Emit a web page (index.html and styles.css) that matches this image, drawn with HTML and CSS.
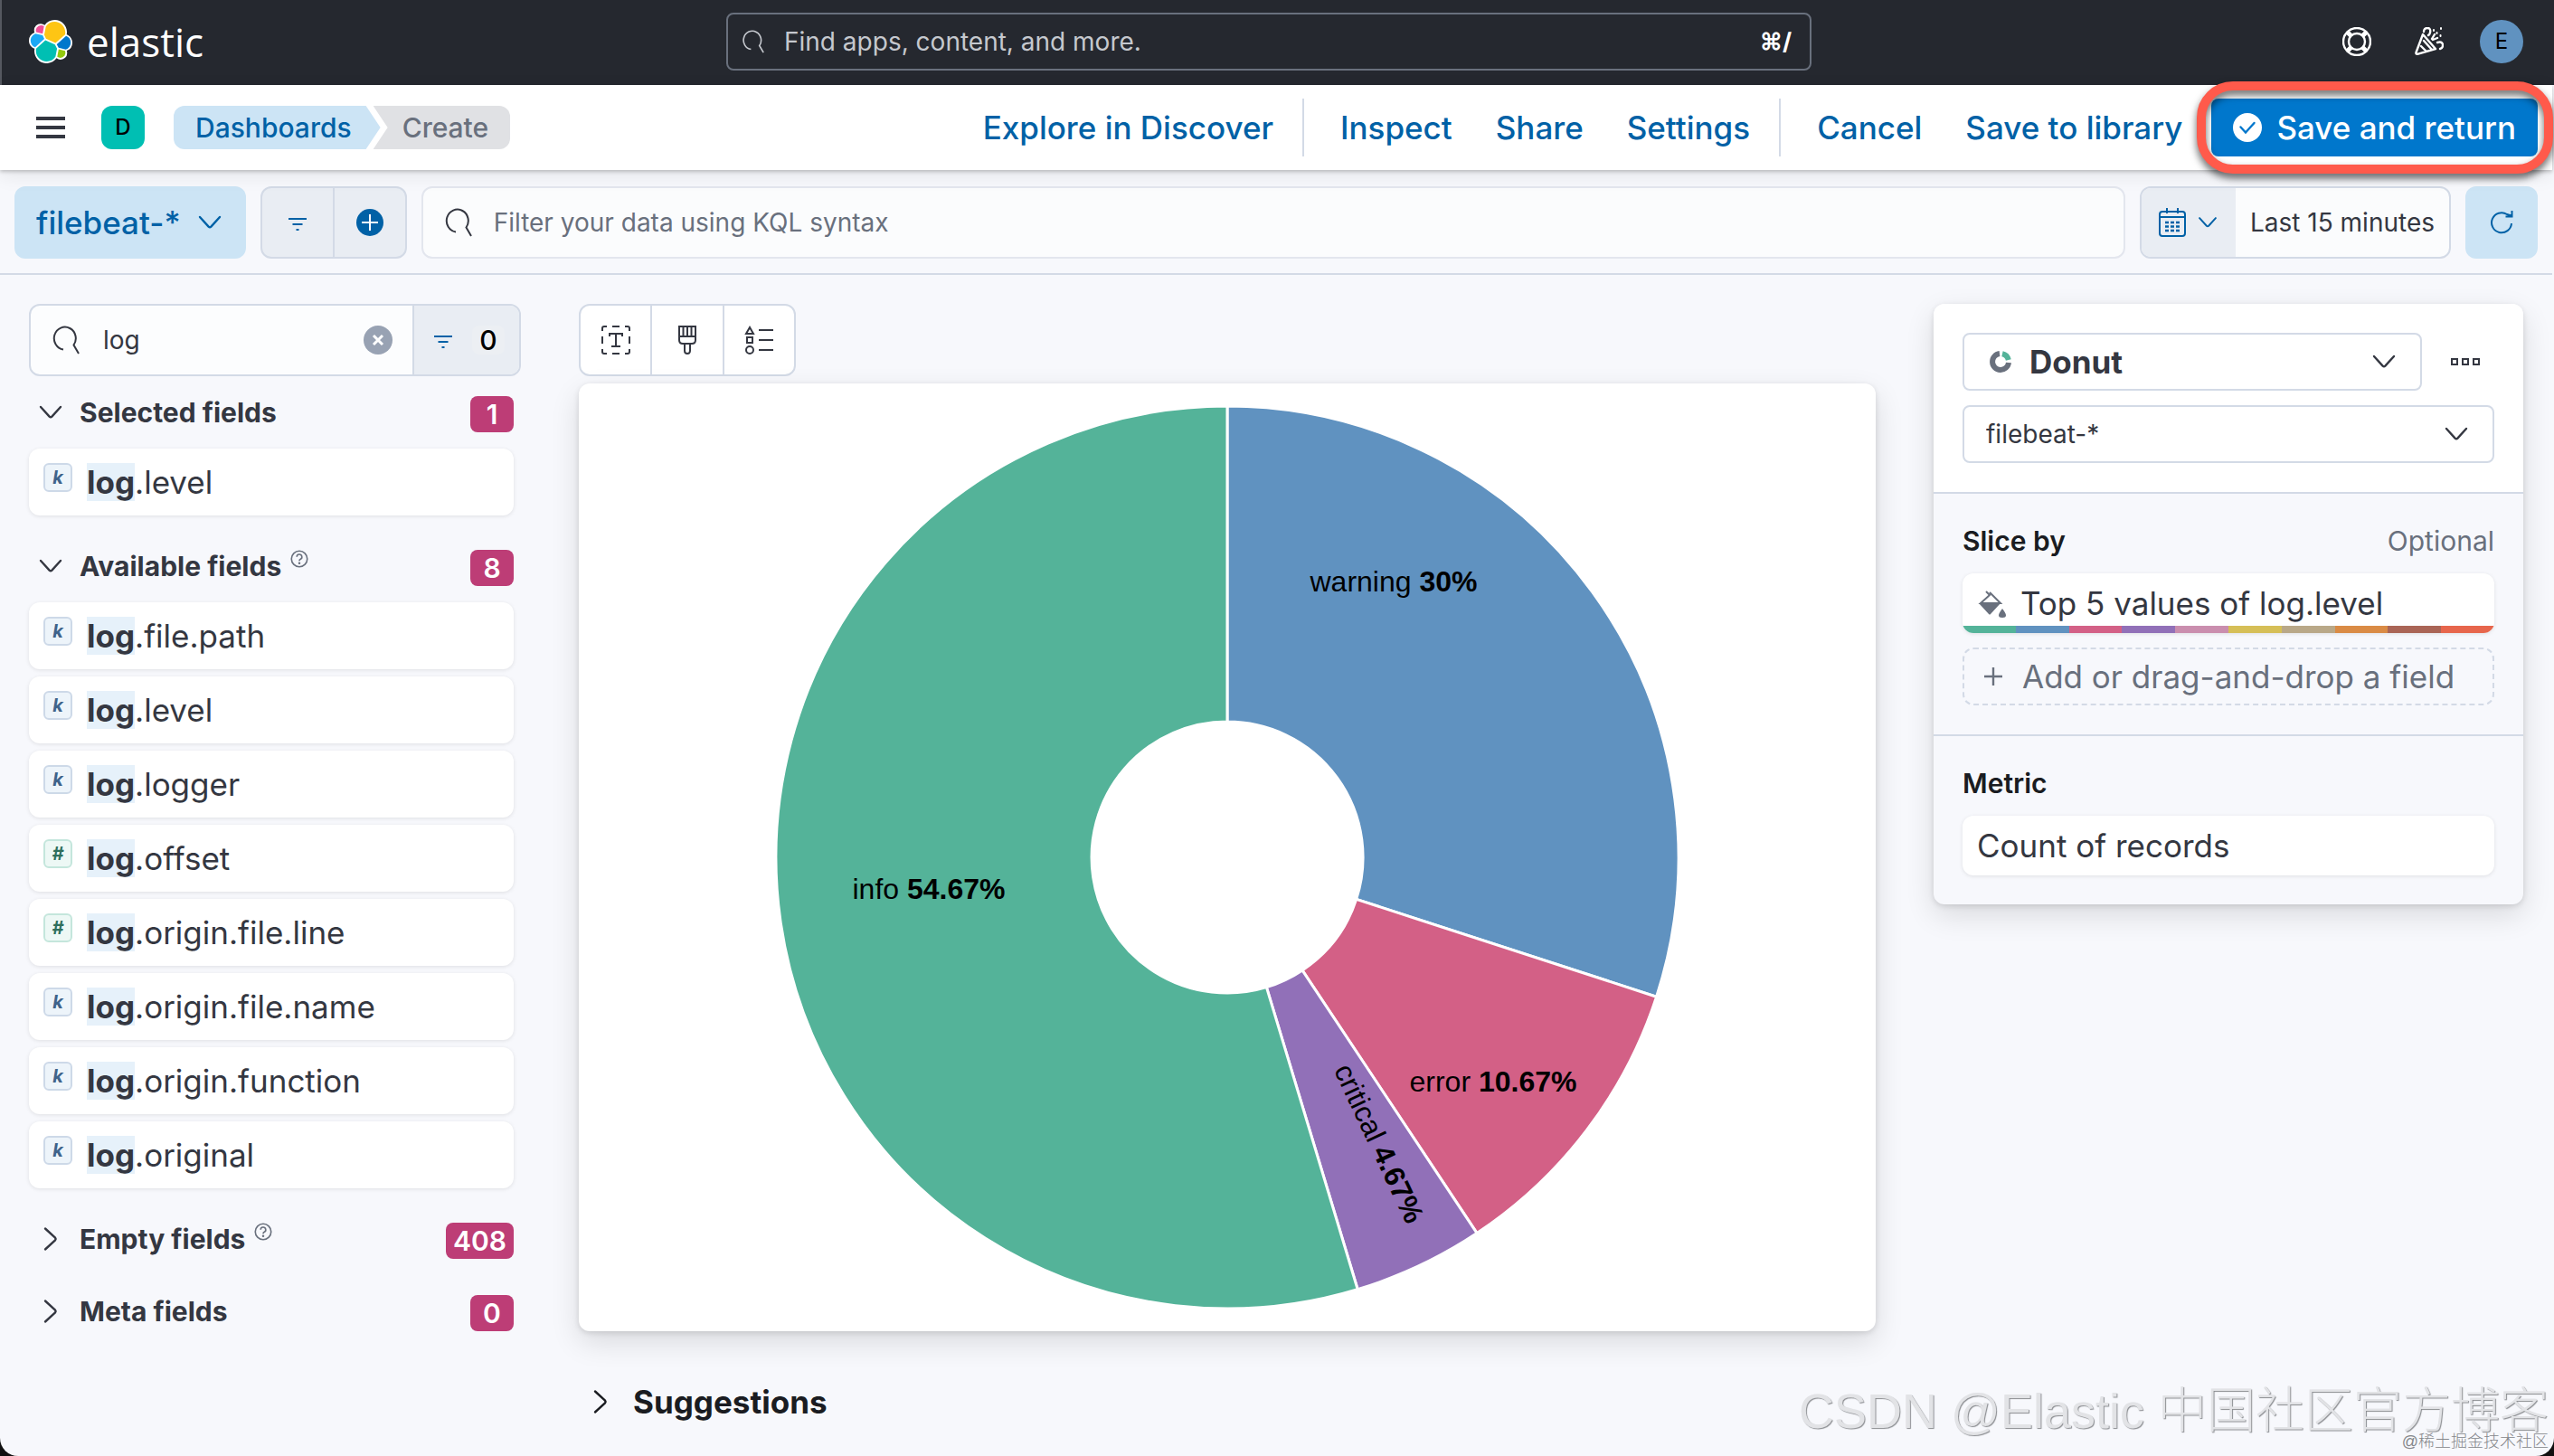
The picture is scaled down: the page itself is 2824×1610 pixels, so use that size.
FILE: index.html
```html
<!DOCTYPE html>
<html lang="en">
<head>
  <meta charset="utf-8">
  <title>Create - Elastic</title>
  <link rel="stylesheet" href="styles.css">
</head>
<body>
  <svg class="sprite" aria-hidden="true">
    <symbol id="i-search" viewBox="0 0 32 32"><path d="M14 26.500A12 12.500 0 1 1 25.500 21.500L31 31" fill="none" stroke="currentColor" stroke-width="2"/></symbol>
    <symbol id="i-down" viewBox="0 0 32 32"><path d="M5 10l9.600 10.600q1.400 1.200 2.800 0L27 10" fill="none" stroke="currentColor" stroke-width="2.400" stroke-linecap="round"/></symbol>
    <symbol id="i-right" viewBox="0 0 32 32"><path d="M10 4.500l11 10.100q1.200 1.400 0 2.800L10 27.500" fill="none" stroke="currentColor" stroke-width="2.400" stroke-linecap="round"/></symbol>
    <symbol id="i-filter" viewBox="0 0 32 32"><path d="M6 12h20M10.500 18h11M14.500 24h3" fill="none" stroke="currentColor" stroke-width="2.200"/></symbol>
    <symbol id="i-help" viewBox="0 0 32 32"><circle cx="16" cy="16" r="14" fill="none" stroke="currentColor" stroke-width="2.600"/><path d="M11.500 12.500a4.500 4.500 0 1 1 6 4.200q-1.500.8-1.500 3" fill="none" stroke="currentColor" stroke-width="2.600"/><circle cx="16" cy="23.500" r="2" fill="currentColor"/></symbol>
  </svg>

  <header class="header">
    <a class="logo" href="#" aria-label="Elastic home">
      <svg viewBox="0 0 32 32">
        <path fill="#fff" d="M32 16.770c0-2.680-1.660-5.040-4.150-5.952.11-.57.166-1.143.166-1.743C28.016 4.070 23.950 0 18.953 0c-2.923 0-5.630 1.400-7.338 3.768a4.808 4.808 0 0 0-2.953-1.005 4.838 4.838 0 0 0-4.833 4.834c0 .584.11 1.153.3 1.675A6.387 6.387 0 0 0 0 15.253c0 2.700 1.674 5.068 4.170 5.976a9.290 9.290 0 0 0-.165 1.744c0 4.990 4.062 9.051 9.050 9.051 2.930 0 5.620-1.410 7.320-3.790a4.783 4.783 0 0 0 2.963 1.020 4.838 4.838 0 0 0 4.834-4.834c0-.585-.11-1.154-.3-1.675A6.387 6.387 0 0 0 32 16.770"/>
        <path fill="#fec514" d="M12.580 13.787l7.002 3.211 7.066-6.213a7.854 7.854 0 0 0 .156-1.565c0-4.323-3.515-7.839-7.838-7.839a7.843 7.843 0 0 0-6.482 3.433l-1.180 6.122z"/>
        <path fill="#00bfb3" d="M5.333 21.228a7.980 7.980 0 0 0-.156 1.590 7.865 7.865 0 0 0 7.854 7.857 7.878 7.878 0 0 0 6.514-3.464l1.167-6.090-1.558-2.981-7.027-3.204z"/>
        <path fill="#f04e98" d="M5.288 9.067l4.800 1.137 1.052-5.476a3.778 3.778 0 0 0-2.295-.77 3.824 3.824 0 0 0-3.557 5.110"/>
        <path fill="#1ba9f5" d="M4.871 10.215c-2.147.714-3.653 2.780-3.653 5.040 0 2.180 1.347 4.124 3.370 4.894l6.735-6.100-1.236-2.646z"/>
        <path fill="#93c90e" d="M20.873 27.213a3.764 3.764 0 0 0 2.285.774 3.824 3.824 0 0 0 3.552-5.118l-4.794-1.125z"/>
        <path fill="#07c" d="M21.844 20.577l5.285 1.240c2.147-.714 3.654-2.780 3.654-5.041a5.260 5.260 0 0 0-3.377-4.887l-6.912 6.070z"/>
      </svg>
      <span>elastic</span>
    </a>
    <div class="global-search">
      <svg class="icon-sm"><use href="#i-search"/></svg>
      <input type="search" placeholder="Find apps, content, and more." aria-label="Find apps, content, and more.">
      <kbd>⌘/</kbd>
    </div>
    <div class="header-actions">
      <button aria-label="Help">
        <svg class="icon" viewBox="0 0 32 32" fill="none" stroke="currentColor"><circle cx="16" cy="16" r="15" stroke-width="2.400"/><circle cx="16" cy="16" r="9" stroke-width="2.400"/><path d="M5.500 5.500l4 4M26.500 5.500l-4 4M5.500 26.500l4-4M26.500 26.500l-4-4" stroke-width="5"/></svg>
      </button>
      <button aria-label="What's new">
        <svg class="icon" viewBox="0 0 32 32" fill="none" stroke="currentColor" stroke-width="2.400" stroke-linecap="round" stroke-linejoin="round"><path d="M9 8L1.500 28q-.5 2 1.500 1.800L23 24zM7 21l6 6M10 15l9 10M10 5q0-4 4-4t3 5q-.5 2.500-2 3M19 13l3-5M20 14l5-2M25 17q5-1.500 6 2 .5 4-3 5"/><path d="M21 3v1M29 1v1M28.500 9v1M24.500 6v1" stroke-width="2"/></svg>
      </button>
      <button class="avatar" aria-label="Account menu">E</button>
    </div>
  </header>

  <nav class="nav">
    <button class="menu" aria-label="Toggle navigation"><svg class="icon" viewBox="0 0 32 32"><path d="M0 6h32M0 16h32M0 26h32" stroke="currentColor" stroke-width="4"/></svg></button>
    <button class="space" aria-label="Default space">D</button>
    <div class="breadcrumbs">
      <a href="#">Dashboards</a>
      <span>Create</span>
    </div>
    <div class="nav-links">
      <a href="#">Explore in Discover</a>
      <i></i>
      <a href="#">Inspect</a>
      <a href="#">Share</a>
      <a href="#">Settings</a>
      <i></i>
      <a href="#">Cancel</a>
      <a href="#">Save to library</a>
    </div>
    <button class="save">
      <svg class="icon" viewBox="0 0 32 32"><circle cx="16" cy="16" r="16" fill="#fff"/><path d="M8.500 15.500l5.500 6 9.500-10.500" fill="none" stroke="#07c" stroke-width="2.400" stroke-linecap="round"/></svg>
      Save and return
    </button>
  </nav>

  <div class="query-bar">
    <button class="data-view">filebeat-*<svg class="icon"><use href="#i-down"/></svg></button>
    <div class="filter-group">
      <button aria-label="Saved queries"><svg class="icon"><use href="#i-filter"/></svg></button>
      <button aria-label="Add filter"><svg class="icon" viewBox="0 0 32 32"><circle cx="16" cy="16" r="15" fill="currentColor"/><path d="M16 7v18M7 16h18" stroke="#fff" stroke-width="2"/></svg></button>
    </div>
    <div class="kql">
      <svg class="icon"><use href="#i-search"/></svg>
      <input type="search" placeholder="Filter your data using KQL syntax" aria-label="Filter your data using KQL syntax">
    </div>
    <div class="date">
      <button class="date-quick" aria-label="Date quick select">
        <svg class="icon" viewBox="0 0 32 32" fill="none" stroke="currentColor" stroke-width="2"><rect x="2" y="4" width="28" height="27" rx="3"/><path d="M2 10h28M10 0v6M22 0v6"/><path d="M8 16h16M8 20.500h16M8 25h16" stroke-width="2.600" stroke-dasharray="4 2"/></svg>
        <svg class="icon-sm"><use href="#i-down"/></svg>
      </button>
      <button class="date-value">Last 15 minutes</button>
    </div>
    <button class="refresh" aria-label="Refresh"><svg class="icon" viewBox="0 0 32 32"><path d="M27 17a11 11 0 1 1-5-10l5 1.500M27.500 3v6.500h-7" fill="none" stroke="currentColor" stroke-width="2"/></svg></button>
  </div>

  <main class="workspace">
    <aside class="sidebar">
      <div class="field-search">
        <svg class="icon"><use href="#i-search"/></svg>
        <input type="text" value="log" aria-label="Search field names">
        <button class="clear" aria-label="Clear input"><svg class="icon" viewBox="0 0 32 32"><circle cx="16" cy="16" r="16" fill="#98a2b3"/><path d="M11 11l10 10M21 11L11 21" stroke="#fff" stroke-width="3"/></svg></button>
        <button class="type-filter" aria-label="Filter by type"><svg class="icon"><use href="#i-filter"/></svg><span>0</span></button>
      </div>

      <button class="group"><svg class="icon"><use href="#i-down"/></svg>Selected fields<span class="count">1</span></button>
      <ul class="fields">
        <li><span class="token">k</span><span><mark>log</mark>.level</span></li>
      </ul>
      <button class="group"><svg class="icon"><use href="#i-down"/></svg>Available fields<svg class="tip"><use href="#i-help"/></svg><span class="count">8</span></button>
      <ul class="fields">
        <li><span class="token">k</span><span><mark>log</mark>.file.path</span></li>
        <li><span class="token">k</span><span><mark>log</mark>.level</span></li>
        <li><span class="token">k</span><span><mark>log</mark>.logger</span></li>
        <li><span class="token number">#</span><span><mark>log</mark>.offset</span></li>
        <li><span class="token number">#</span><span><mark>log</mark>.origin.file.line</span></li>
        <li><span class="token">k</span><span><mark>log</mark>.origin.file.name</span></li>
        <li><span class="token">k</span><span><mark>log</mark>.origin.function</span></li>
        <li><span class="token">k</span><span><mark>log</mark>.original</span></li>
      </ul>
      <button class="group"><svg class="icon"><use href="#i-right"/></svg>Empty fields<svg class="tip"><use href="#i-help"/></svg><span class="count">408</span></button>
      <button class="group"><svg class="icon"><use href="#i-right"/></svg>Meta fields<span class="count">0</span></button>
    </aside>

    <section class="editor">
      <div class="toolbar">
        <button aria-label="Labels"><svg class="icon" viewBox="0 0 32 32" fill="none" stroke="currentColor" stroke-width="2"><path d="M1 6V3q0-2 2-2h3M26 1h3q2 0 2 2v3M31 26v3q0 2-2 2h-3M6 31H3q-2 0-2-2v-3M12 1h8M12 31h8M1 12v8M31 12v8M9 12V9h14v3M16 9v14M11 23h10"/></svg></button>
        <button aria-label="Appearance"><svg class="icon" viewBox="0 0 32 32" fill="none" stroke="currentColor" stroke-width="2"><path d="M7 1h18v15q0 4-4 4H11q-4 0-4-4zM7 12h18M11.500 1v11M16 1v11M20.500 1v11M13 20v8q0 3 3 3t3-3v-8"/></svg></button>
        <button aria-label="Legend"><svg class="icon" viewBox="0 0 32 32" fill="none" stroke="currentColor" stroke-width="2"><path d="M6 2l4 7H2zM3 13h6v6H3zM16 5h16M16 16h16M16 27h16"/><circle cx="6" cy="27" r="4"/></svg></button>
      </div>
      <div class="chart">
        <svg viewBox="0 0 1434 1048" role="img" aria-label="Donut of log.level">
          <g stroke="#fff" stroke-width="3">
            <path fill="#6092c0" d="M717 25A499 499 0 0 1 1191.600 678.200L859.700 570.400A150 150 0 0 0 717 374Z"/>
            <path fill="#d36086" d="M1191.600 678.200A499 499 0 0 1 993.100 939.600L800 648.900A150 150 0 0 0 859.700 570.400Z"/>
            <path fill="#9170b8" d="M993.100 939.600A499 499 0 0 1 861.200 1001.700L760.400 667.600A150 150 0 0 0 800 648.900Z"/>
            <path fill="#54b399" d="M861.200 1001.700A499 499 0 1 1 717 25L717 374A150 150 0 1 0 760.400 667.600Z"/>
          </g>
          <g class="slice-labels">
            <text x="901" y="230">warning <tspan>30%</tspan></text>
            <text x="1011" y="783">error <tspan>10.67%</tspan></text>
            <text x="387" y="570">info <tspan>54.67%</tspan></text>
            <text transform="translate(875 845) rotate(64.800)">critical <tspan>4.67%</tspan></text>
          </g>
        </svg>
      </div>
      <button class="suggestions"><svg class="icon"><use href="#i-right"/></svg>Suggestions</button>
    </section>

    <aside class="config">
      <div class="config-head">
        <div class="chart-type">
          <div class="picker strong">
            <svg class="icon" viewBox="0 0 32 32" fill="none" stroke-width="6"><path d="M15 7a9 9 0 1 0 10 10" stroke="#69707d"/><path d="M18 7.200a9 9 0 0 1 6.800 6.800" stroke="#54b399"/></svg>
            <select aria-label="Visualization type"><option>Donut</option></select>
            <svg class="icon"><use href="#i-down"/></svg>
          </div>
          <button class="more" aria-label="Layer options"><svg class="icon" viewBox="0 0 32 32" fill="none" stroke="currentColor" stroke-width="2"><path d="M1 13h6v6H1zM13 13h6v6h-6zM25 13h6v6h-6z"/></svg></button>
        </div>
        <div class="picker">
          <select aria-label="Data view"><option>filebeat-*</option></select>
          <svg class="icon"><use href="#i-down"/></svg>
        </div>
      </div>
      <div class="config-section">
        <h3>Slice by <span>Optional</span></h3>
        <button class="dimension">
          <svg class="icon" viewBox="0 0 32 32"><path d="M10 3l4 4-10 9h22L14 4" fill="none" stroke="#69707d" stroke-width="2"/><path d="M2 16h24L15 28q-1 1-2 0zM28 22q8 10 0 10t0-10" fill="#69707d"/></svg>
          Top 5 values of log.level
          <span class="palette"><i></i><i></i><i></i><i></i><i></i><i></i><i></i><i></i><i></i><i></i></span>
        </button>
        <button class="dimension empty">
          <svg class="icon" viewBox="0 0 32 32"><path d="M16 6v20M6 16h20" stroke="currentColor" stroke-width="2.400"/></svg>
          Add or drag-and-drop a field
        </button>
      </div>
      <div class="config-section">
        <h3>Metric</h3>
        <button class="dimension">Count of records</button>
      </div>
    </aside>
  </main>

  <div class="watermark">CSDN @Elastic 中国社区官方博客</div>
  <div class="watermark-small">@稀土掘金技术社区</div>
</body>
</html>
```

FILE: styles.css
```css
* {
  box-sizing: border-box;
}

html {
  background: #111;
}

body {
  position: relative;
  min-height: 100vh;
  margin: 0;
  padding-right: 2px;
  overflow-x: hidden;
  background: #f7f8fc;
  border-radius: 0 0 20px 20px;
  color: #343741;
  font-family: Inter, "Noto Sans CJK SC", sans-serif;
  font-size: 28px;
  line-height: 40px;
}

button,
input,
select {
  margin: 0;
  padding: 0;
  border: none;
  outline: none;
  background: none;
  color: inherit;
  font: inherit;
}

input[type="search"] {
  appearance: none;
}

a {
  color: #0061a6;
  text-decoration: none;
}

.sprite {
  position: absolute;
  width: 0;
  height: 0;
}

.icon {
  display: block;
  flex: none;
  width: 32px;
  height: 32px;
}

.icon-sm {
  display: block;
  flex: none;
  width: 26px;
  height: 26px;
}

/* Top bar */
.header {
  display: grid;
  grid-template-columns: 1fr 1200px 1fr;
  align-items: center;
  height: 94px;
  margin-right: -2px;
  padding: 0 34px 2px 30px;
  background: #25282f;
  border-left: 2px solid #555860;
  color: #fff;
}

.logo {
  display: flex;
  align-items: center;
  gap: 16px;
  color: #fff;
  font-family: "Open Sans", sans-serif;
  font-size: 44px;
}

.logo svg {
  width: 48px;
  height: 48px;
}

.global-search {
  display: flex;
  align-items: center;
  gap: 22px;
  height: 64px;
  margin-left: -8px;
  margin-right: 8px;
  padding: 0 20px 0 14px;
  border: 2px solid #69707d;
  border-radius: 8px;
  color: #c5c8ce;
}

.global-search input {
  flex: 1;
}

.global-search ::placeholder {
  color: #c5c8ce;
}

.global-search kbd {
  color: #fff;
  font-family: Inter, "DejaVu Sans", sans-serif;
  font-size: 26px;
  font-weight: 700;
}

.header-actions {
  display: flex;
  justify-content: flex-end;
  align-items: center;
  gap: 48px;
}

.avatar {
  width: 48px;
  height: 48px;
  margin-left: -8px;
  background: #6092c0;
  border-radius: 50%;
  color: #000;
  font-size: 24px;
}

/* Breadcrumbs and page actions */
.nav {
  position: relative;
  display: flex;
  align-items: center;
  height: 94px;
  padding: 0 16px 0 40px;
  background: #fff;
  box-shadow: 0 2px 4px rgba(0, 0, 0, 0.2), 0 6px 20px rgba(0, 0, 0, 0.08);
}

.space {
  width: 48px;
  height: 48px;
  margin: 0 32px 0 40px;
  background: #00bfb3;
  border-radius: 12px;
  color: #000;
  font-size: 24px;
  font-weight: 500;
}

.breadcrumbs {
  display: flex;
  font-size: 30px;
  font-weight: 500;
  line-height: 48px;
}

.breadcrumbs a {
  padding: 0 32px 0 24px;
  background: #cce4f5;
  border-radius: 12px 0 0 12px;
  clip-path: polygon(0 0, calc(100% - 16px) 0, 100% 50%, calc(100% - 16px) 100%, 0 100%);
}

.breadcrumbs span {
  margin-left: -8px;
  padding: 0 24px 0 32px;
  background: #e0e1e4;
  border-radius: 0 12px 12px 0;
  clip-path: polygon(0 0, 100% 0, 100% 100%, 0 100%, 16px 50%);
  color: #69707d;
}

.nav-links {
  display: flex;
  align-items: center;
  gap: 48px;
  margin-left: auto;
  margin-right: 32px;
  font-size: 35px;
  font-weight: 500;
}

.nav-links i {
  width: 2px;
  height: 64px;
  margin: 0 -8px 0 -16px;
  background: #d3dae6;
}

.save {
  position: relative;
  display: flex;
  align-items: center;
  gap: 16px;
  height: 64px;
  padding: 0 24px;
  background: #07c;
  border-radius: 8px;
  color: #fff;
  font-size: 35px;
  font-weight: 500;
}

/* red marker ring around the primary action */
.save::after {
  content: "";
  position: absolute;
  inset: -19px -17px -19px -16px;
  border: 10px solid #ff5a4b;
  border-radius: 40px;
  filter: drop-shadow(0 5px 4px rgba(0, 0, 0, 0.6));
}

/* Query bar */
.query-bar {
  display: flex;
  gap: 16px;
  height: 116px;
  padding: 18px 16px 16px;
  border-bottom: 2px solid #d3dae6;
}

.data-view {
  display: flex;
  align-items: center;
  gap: 16px;
  padding: 0 24px;
  background: #cce4f5;
  border-radius: 12px;
  color: #0061a6;
  font-size: 35px;
  font-weight: 500;
}

.filter-group {
  display: flex;
  border: 2px solid #d3dae6;
  border-radius: 12px;
  background: #e9edf3;
  color: #0061a6;
}

.filter-group button {
  padding: 0 23px;
}

.filter-group button + button {
  border-left: 2px solid #d3dae6;
}

.kql {
  display: flex;
  flex: 1;
  align-items: center;
  gap: 24px;
  padding: 0 22px;
  background: #fbfcfd;
  border: 2px solid #e3e6ee;
  border-radius: 12px;
}

.kql input {
  flex: 1;
}

.kql ::placeholder {
  color: #69707d;
}

.date {
  display: flex;
  border: 2px solid #d3dae6;
  border-radius: 12px;
  background: #fbfcfd;
  overflow: hidden;
}

.date-quick {
  display: flex;
  align-items: center;
  gap: 10px;
  padding: 0 18px;
  background: #e9edf3;
  color: #0061a6;
}

.date-value {
  padding: 0 16px;
}

.refresh {
  padding: 0 24px;
  background: #cce4f5;
  border-radius: 12px;
  color: #0061a6;
}

/* Workspace */
.workspace {
  display: flex;
  align-items: flex-start;
  padding: 32px;
}

/* Field list */
.sidebar {
  flex: none;
  width: 544px;
  margin-right: 64px;
}

.field-search {
  display: flex;
  align-items: center;
  height: 80px;
  padding-left: 22px;
  background: #fcfdfe;
  border: 2px solid #d3dae6;
  border-radius: 12px;
  overflow: hidden;
}

.field-search input {
  flex: 1;
  min-width: 0;
  margin-left: 26px;
}

.clear {
  margin-right: 22px;
}

.type-filter {
  display: flex;
  align-items: center;
  align-self: stretch;
  gap: 16px;
  padding: 0 16px;
  background: #e9edf3;
  border-left: 2px solid #d3dae6;
  color: #0061a6;
}

.type-filter span {
  width: 36px;
  background: #eceff3;
  border-radius: 8px;
  color: #000;
  font-size: 30px;
  font-weight: 500;
  line-height: 32px;
}

.group {
  display: flex;
  align-items: center;
  width: 100%;
  height: 80px;
  padding: 0 8px;
  font-size: 30px;
  font-weight: 700;
}

.group .icon {
  margin-right: 16px;
}

.group .tip {
  width: 20px;
  height: 20px;
  margin: 0 0 16px 10px;
  color: #69707d;
}

.count {
  min-width: 48px;
  margin-top: 4px;
  margin-left: auto;
  padding: 0 8px;
  background: #bd3d76;
  border-radius: 8px;
  color: #fff;
  font-weight: 600;
}

.fields {
  display: flex;
  flex-direction: column;
  gap: 8px;
  margin: 0 8px 16px 0;
  padding: 0;
  list-style: none;
}

.fields li {
  display: flex;
  gap: 16px;
  height: 74px;
  padding: 16px;
  background: #fff;
  border-radius: 12px;
  box-shadow: 0 1px 4px rgba(0, 0, 0, 0.1);
  font-size: 35px;
  line-height: 42px;
}

.fields mark {
  background: #e6f1fa;
  color: inherit;
  font-weight: 700;
}

.token {
  width: 32px;
  height: 32px;
  background: #edf4fa;
  border: 2px solid #cdd9e8;
  border-radius: 6px;
  color: #3f638a;
  font-size: 20px;
  font-style: italic;
  font-weight: 700;
  line-height: 28px;
  text-align: center;
}

.token.number {
  background: #edf8f5;
  border-color: #c4e6dc;
  color: #2f6f5c;
}

/* Chart */
.editor {
  flex: 1;
  min-width: 0;
}

.toolbar {
  display: flex;
  width: 240px;
  height: 80px;
  background: #fff;
  border: 2px solid #d3dae6;
  border-radius: 12px;
}

.toolbar button {
  display: flex;
  flex: 1;
  align-items: center;
  justify-content: center;
}

.toolbar button + button {
  border-left: 2px solid #d3dae6;
}

.chart {
  margin-top: 8px;
  background: #fff;
  border-radius: 12px;
  box-shadow: 0 2px 6px rgba(0, 0, 0, 0.12), 0 12px 32px rgba(0, 0, 0, 0.12);
}

.chart svg {
  display: block;
  width: 100%;
}

.slice-labels {
  font-family: "Liberation Sans", Arial, sans-serif;
  font-size: 32px;
  text-anchor: middle;
}

.slice-labels tspan {
  font-weight: 700;
}

.suggestions {
  display: flex;
  align-items: center;
  gap: 20px;
  margin-top: 58px;
  padding-left: 8px;
  color: #1a1c21;
  font-size: 35px;
  font-weight: 700;
}

/* Layer config */
.config {
  flex: none;
  width: 652px;
  margin-left: 64px;
  border-radius: 12px;
  box-shadow: 0 2px 6px rgba(0, 0, 0, 0.12), 0 12px 32px rgba(0, 0, 0, 0.12);
}

.config-head {
  display: flex;
  flex-direction: column;
  gap: 16px;
  padding: 32px;
  background: #fff;
  border-radius: 12px 12px 0 0;
}

.chart-type {
  display: flex;
}

.chart-type .picker {
  flex: 1;
}

.more {
  padding: 0 16px 0 32px;
}

.picker {
  display: flex;
  align-items: center;
  height: 64px;
  padding: 0 24px;
  border: 2px solid #d3dae6;
  border-radius: 8px;
}

.picker select {
  flex: 1;
  appearance: none;
}

.picker.strong {
  font-size: 35px;
  font-weight: 700;
}

.picker.strong select {
  margin-left: 16px;
}

.config-section {
  display: flex;
  flex-direction: column;
  gap: 16px;
  padding: 32px;
  border-top: 2px solid #d3dae6;
}

.config-section h3 {
  display: flex;
  justify-content: space-between;
  margin: 0;
  color: #1a1c21;
  font-size: 30px;
  font-weight: 600;
}

.config-section h3 span {
  color: #69707d;
  font-weight: 400;
}

.dimension {
  position: relative;
  display: flex;
  align-items: center;
  gap: 16px;
  height: 66px;
  padding: 0 16px;
  background: #fff;
  border-radius: 12px;
  box-shadow: 0 1px 4px rgba(0, 0, 0, 0.1);
  overflow: hidden;
  font-size: 35px;
}

.dimension.empty {
  height: 64px;
  background: none;
  border: 2px dashed #d3dae6;
  box-shadow: none;
  color: #69707d;
}

.palette {
  position: absolute;
  right: 0;
  bottom: 0;
  left: 0;
  display: flex;
  height: 8px;
}

.palette i {
  flex: 1;
  background: #54b399;
}

.palette i:nth-child(2) { background: #6092c0; }
.palette i:nth-child(3) { background: #d36086; }
.palette i:nth-child(4) { background: #9170b8; }
.palette i:nth-child(5) { background: #ca8eae; }
.palette i:nth-child(6) { background: #d6bf57; }
.palette i:nth-child(7) { background: #b9a888; }
.palette i:nth-child(8) { background: #da8b45; }
.palette i:nth-child(9) { background: #aa6556; }
.palette i:nth-child(10) { background: #e7664c; }

/* Watermarks */
.watermark,
.watermark-small {
  position: absolute;
  right: 6px;
  font-family: "Liberation Sans", "Noto Sans CJK SC", sans-serif;
  font-weight: 300;
  white-space: nowrap;
}

.watermark {
  bottom: 20px;
  color: #e2e3e6;
  font-size: 54px;
  line-height: 60px;
  text-shadow: 1px 1px 1px #8a8c90;
}

.watermark-small {
  bottom: 4px;
  color: #85878b;
  font-size: 18px;
  line-height: 24px;
}
```
